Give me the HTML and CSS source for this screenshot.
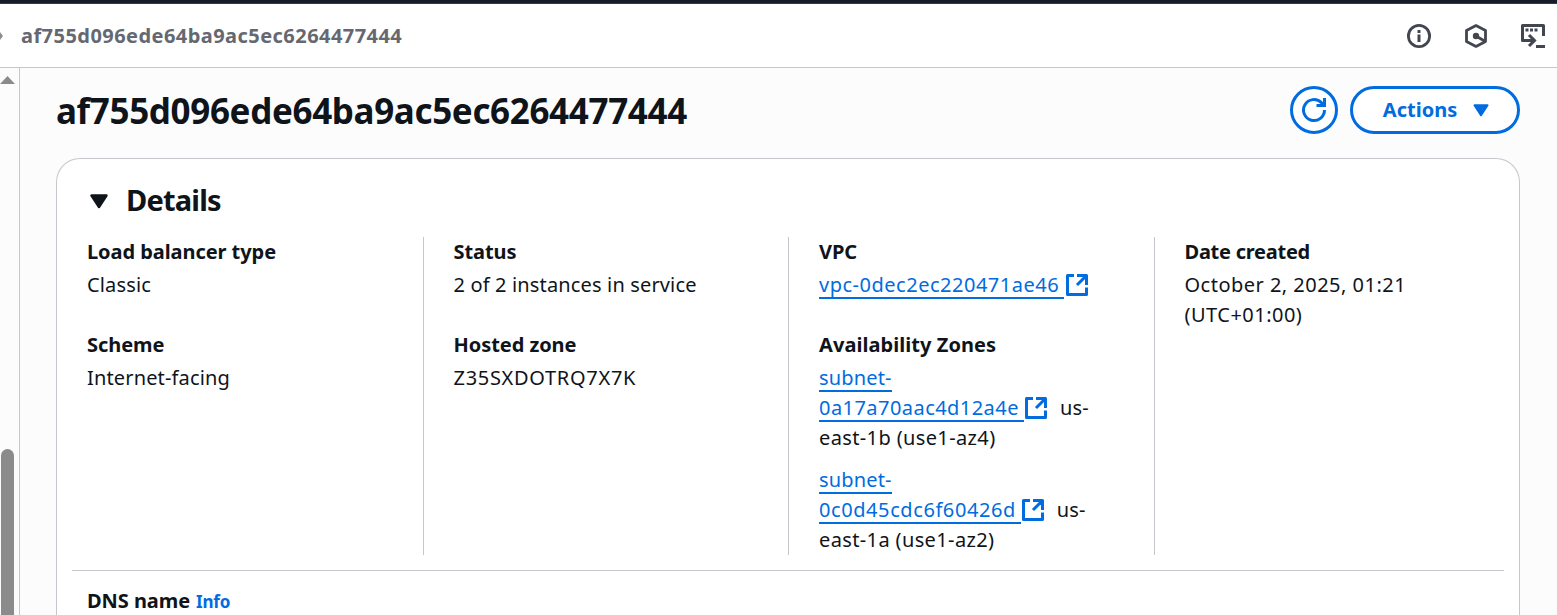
FILE: index.html
```html
<!DOCTYPE html>
<html lang="en">
<head>
<meta charset="utf-8">
<title>Load balancer details</title>
<link rel="stylesheet" href="styles.css">
</head>
<body>
<svg class="defs" width="0" height="0" aria-hidden="true">
  <symbol id="external" viewBox="0 0 22 22">
    <path d="M8 1.5H1.5V20.5H20.500V13.500M11 1.500H20.500V11M20 2L11 11" fill="none" stroke="currentColor" stroke-width="3" stroke-linejoin="round"/>
  </symbol>
  <symbol id="caret" viewBox="0 0 18 15">
    <path d="M1.500 1.500H16.500L9 13Z" fill="currentColor" stroke="currentColor" stroke-width="2.400" stroke-linejoin="round"/>
  </symbol>
</svg>
<div class="topbar"></div>
<header class="crumbs">
  <svg class="crumb-arrow" width="3" height="8" viewBox="0 0 3 8"><path d="M0 0L3 4L0 8Z" fill="#8c8c94"/></svg>
  <span class="crumb">af755d096ede64ba9ac5ec6264477444</span>
  <div class="tools">
    <svg width="26" height="26" viewBox="0 0 26 26" fill="none" stroke="#424650">
      <circle cx="13" cy="13" r="10.600" stroke-width="2.800"/>
      <path d="M13 11.500V19M13 7V10" stroke-width="3"/>
    </svg>
    <svg width="26" height="26" viewBox="0 0 26 26" fill="none" stroke="#424650">
      <path d="M13 2.600L22.500 7.500V18.500L13 23.400L3.500 18.500V7.500Z" stroke-width="2.800" stroke-linejoin="round"/>
      <circle cx="13" cy="13" r="3.200" fill="#424650" stroke="none"/>
      <path d="M13 13L21.500 18" stroke-width="2.800"/>
    </svg>
    <svg width="26" height="26" viewBox="0 0 26 26" fill="none" stroke="#424650">
      <path d="M14 17.500H2.500V2.500H23.500V13" stroke-width="3" stroke-linejoin="round"/>
      <path d="M5.500 7H8.500M10 7H13M14.500 7H17.500" stroke-width="3"/>
      <path d="M9 12L14.500 17.500L9 23" stroke-width="3"/>
      <path d="M16 23.500H25" stroke-width="3"/>
    </svg>
  </div>
</header>
<div class="body">
  <aside class="scroll">
    <svg class="scroll-up" width="15" height="8" viewBox="0 0 15 8"><path d="M7.500 0L15 8H0Z" fill="#8b8b8b"/></svg>
    <div class="thumb"></div>
  </aside>
  <main class="main">
    <div class="heading">
      <h1 class="title">af755d096ede64ba9ac5ec6264477444</h1>
      <div class="buttons">
        <button class="refresh" aria-label="Refresh">
          <svg width="26" height="26" viewBox="0 0 26 26" fill="none" stroke="currentColor" stroke-width="3">
            <path d="M23.500 13A10.500 10.500 0 1 1 20.500 5.700L23 8.500"/>
            <path d="M23.500 1V8.500H15.500"/>
          </svg>
        </button>
        <button class="actions"><span>Actions</span><svg width="16" height="13"><use href="#caret"/></svg></button>
      </div>
    </div>
    <section class="card">
      <div class="card-head"><svg width="18" height="15"><use href="#caret"/></svg><h2 class="subtitle">Details</h2></div>
      <div class="columns">
        <div class="column">
          <div><div class="label">Load balancer type</div><div class="value">Classic</div></div>
          <div><div class="label">Scheme</div><div class="value">Internet-facing</div></div>
        </div>
        <div class="column">
          <div><div class="label">Status</div><div class="value">2 of 2 instances in service</div></div>
          <div><div class="label">Hosted zone</div><div class="value code">Z35SXDOTRQ7X7K</div></div>
        </div>
        <div class="column">
          <div><div class="label">VPC</div><div class="value"><a class="link vpc">vpc-0dec2ec220471ae46</a><svg class="ext" width="22" height="22"><use href="#external"/></svg></div></div>
          <div><div class="label zones">Availability Zones</div>
            <div class="value zone"><a class="link short">subnet-</a><br><a class="link">0a17a70aac4d12a4e</a><svg class="ext" width="22" height="22"><use href="#external"/></svg><span class="region">us-</span><br>east-1b (use1-az4)</div>
            <div class="value zone"><a class="link short">subnet-</a><br><a class="link wide">0c0d45cdc6f60426d</a><svg class="ext" width="22" height="22"><use href="#external"/></svg><span class="region">us-</span><br>east-1a (use1-az2)</div>
          </div>
        </div>
        <div class="column">
          <div><div class="label created">Date created</div><div class="value date">October 2, 2025, 01:21<br>(UTC+01:00)</div></div>
        </div>
      </div>
      <div class="dns"><span class="label">DNS name</span><a class="info">Info</a></div>
    </section>
  </main>
</div>
</body>
</html>
```
FILE: styles.css
```css
* { box-sizing: border-box; }
body { margin: 0; height: 615px; overflow: hidden; display: flex; flex-direction: column; background: #fcfcfd; color: #0f141a; font: 20px/30px "Noto Sans", "Open Sans", sans-serif; }
svg { display: block; flex: none; }
.defs { display: none; }
.topbar { height: 4px; background: #161d29; flex: none; border-bottom: 1px solid #333b46; }
.crumbs { height: 64px; flex: none; display: flex; align-items: center; background: #fff; border-bottom: 1px solid #c6c6cd; }
.crumb { margin-left: 18px; font-weight: 700; letter-spacing: 0.45px; color: #656871; }
.tools { margin-left: auto; display: flex; gap: 31px; padding-right: 11px; }
.body { flex: 1; min-height: 0; display: flex; }
.scroll { width: 20px; flex: none; border-right: 1px solid #c6c6cd; padding-top: 8px; display: flex; flex-direction: column; }
.thumb { width: 13px; flex: 1; margin: 365px 0 0 1px; border-radius: 7px 7px 0 0; background: #8b8b8b; }
.main { flex: 1; min-width: 0; padding: 18px 37px 0 36px; display: flex; flex-direction: column; }
.heading { height: 48px; flex: none; display: flex; align-items: center; justify-content: space-between; }
.title { margin: 0; font-size: 35px; line-height: 44px; font-weight: 700; letter-spacing: -0.35px; padding-top: 1px; }
.buttons { display: flex; gap: 12px; }
button { height: 48px; border: 3px solid #006ce0; border-radius: 24px; color: #006ce0; background: #fff; display: flex; align-items: center; justify-content: center; font: 700 20px/30px "Noto Sans", sans-serif; padding: 0; }
.refresh { width: 48px; }
.actions { width: 170px; gap: 16px; padding-left: 2px; }
.card { margin-top: 24px; flex: 1; min-height: 0; border: 1px solid #c6c6cd; border-bottom: 0; border-radius: 24px 24px 0 0; background: #fff; }
.card-head { height: 78px; display: flex; align-items: center; gap: 18px; padding: 6px 0 0 33px; }
.subtitle { margin: 0; font-size: 29px; line-height: 36px; font-weight: 700; letter-spacing: -0.8px; padding-bottom: 2px; }
.columns { display: grid; grid-template-columns: repeat(4, 1fr); height: 318px; }
.column { padding-left: 30px; display: flex; flex-direction: column; gap: 30px; }
.column + .column { border-left: 1px solid #c6c6cd; }
.label { font-weight: 700; letter-spacing: -0.06px; }
.zones { letter-spacing: 0.06px; }
.created { letter-spacing: -0.25px; }
.value { margin-top: 3px; white-space: nowrap; letter-spacing: 0.15px; }
.code { letter-spacing: 0.7px; }
.date { letter-spacing: 0.48px; }
.zone { letter-spacing: 0.37px; }
.zone + .zone { margin-top: 12px; }
.link { color: #006ce0; background: linear-gradient(#006ce0, #006ce0) 0 calc(100% - 1px) / 100% 2px no-repeat; padding: 0 5px 2px 0; letter-spacing: 0.45px; }
.vpc { letter-spacing: 0.51px; }
.wide { letter-spacing: 0.58px; }
.short { padding-right: 0; letter-spacing: 0.16px; }
.ext { display: inline-block; vertical-align: -4px; color: #006ce0; margin-left: 2px; }
.zone .ext { margin-left: 1px; }
.region { margin-left: 13px; letter-spacing: 0.16px; }
.dns { margin: 15px 15px 0; border-top: 1px solid #c6c6cd; padding: 15px 0 0 15px; height: 45px; display: flex; gap: 6px; }
.info { color: #006ce0; font-weight: 700; font-size: 17px; line-height: 32px; letter-spacing: -0.2px; }
```
